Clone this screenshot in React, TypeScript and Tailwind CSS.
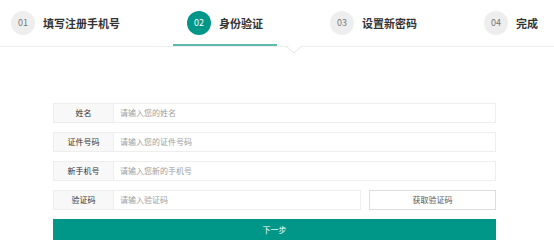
const steps = [
  { no: '01', label: '填写注册手机号' },
  { no: '02', label: '身份验证', active: true },
  { no: '03', label: '设置新密码' },
  { no: '04', label: '完成' },
];

const fields = [
  { label: '姓名', placeholder: '请输入您的姓名' },
  { label: '证件号码', placeholder: '请输入您的证件号码' },
  { label: '新手机号', placeholder: '请输入您新的手机号' },
];

function Field({ label, placeholder, grow }: { label: string; placeholder: string; grow?: boolean }) {
  return (
    <div
      className={
        grow
          ? 'flex flex-1 h-[20px] shrink-0 border border-[#eeeeee] bg-white'
          : 'flex h-[20px] shrink-0 border border-[#eeeeee] bg-white'
      }
    >
      <div className="w-[60px] shrink-0 bg-[#f8f8f8] border-r border-[#eeeeee] flex items-center justify-center text-[8px] text-[#333]">
        {label}
      </div>
      <input
        className="flex-1 min-w-0 px-[6px] text-[8px] text-[#333] outline-none placeholder:text-[#a0a0a0] bg-white"
        placeholder={placeholder}
      />
    </div>
  );
}

export default function App() {
  return (
    <div
      className="w-[554px] h-[249px] bg-white relative overflow-hidden"
      style={{ fontFamily: '"Noto Sans CJK SC", "Noto Sans", sans-serif' }}
    >
      <div className="h-[47px] border-b border-[#eeeeee] flex items-center justify-between pl-[11px] pr-[16px]">
        {steps.map((s) => (
          <div key={s.no} className="relative h-full flex items-center gap-[8px]">
            <div
              className={
                s.active
                  ? 'w-[24px] h-[24px] rounded-full bg-[#009688] text-white text-[9px] flex items-center justify-center'
                  : 'w-[24px] h-[24px] rounded-full bg-[#eeeeee] text-[#777] text-[9px] flex items-center justify-center'
              }
            >
              {s.no}
            </div>
            <span className="text-[11px] font-bold text-[#333]">{s.label}</span>
            {s.active && (
              <span className="absolute left-[-14px] right-[-14px] bottom-0 h-[2px] bg-[#5fb8ad]" />
            )}
          </div>
        ))}
      </div>
      <svg className="absolute left-[286px] top-[46px]" width="16" height="8" viewBox="0 0 16 8">
        <polygon points="0,0 8,7 16,0" fill="#fff" />
        <polyline points="0,0 8,7 16,0" fill="none" stroke="#e4e4e4" strokeWidth="1" />
      </svg>

      <div className="ml-[53px] w-[443px] mt-[56px] flex flex-col gap-[9px]">
        {fields.map((f) => (
          <Field key={f.label} label={f.label} placeholder={f.placeholder} />
        ))}
        <div className="flex gap-[8px]">
          <Field label="验证码" placeholder="请输入验证码" grow />
          <button className="w-[127px] h-[20px] border border-[#dddddd] bg-white text-[8px] text-[#555]">
            获取验证码
          </button>
        </div>
        <button className="h-[21px] bg-[#009688] text-white text-[8px]">下一步</button>
      </div>
    </div>
  );
}
